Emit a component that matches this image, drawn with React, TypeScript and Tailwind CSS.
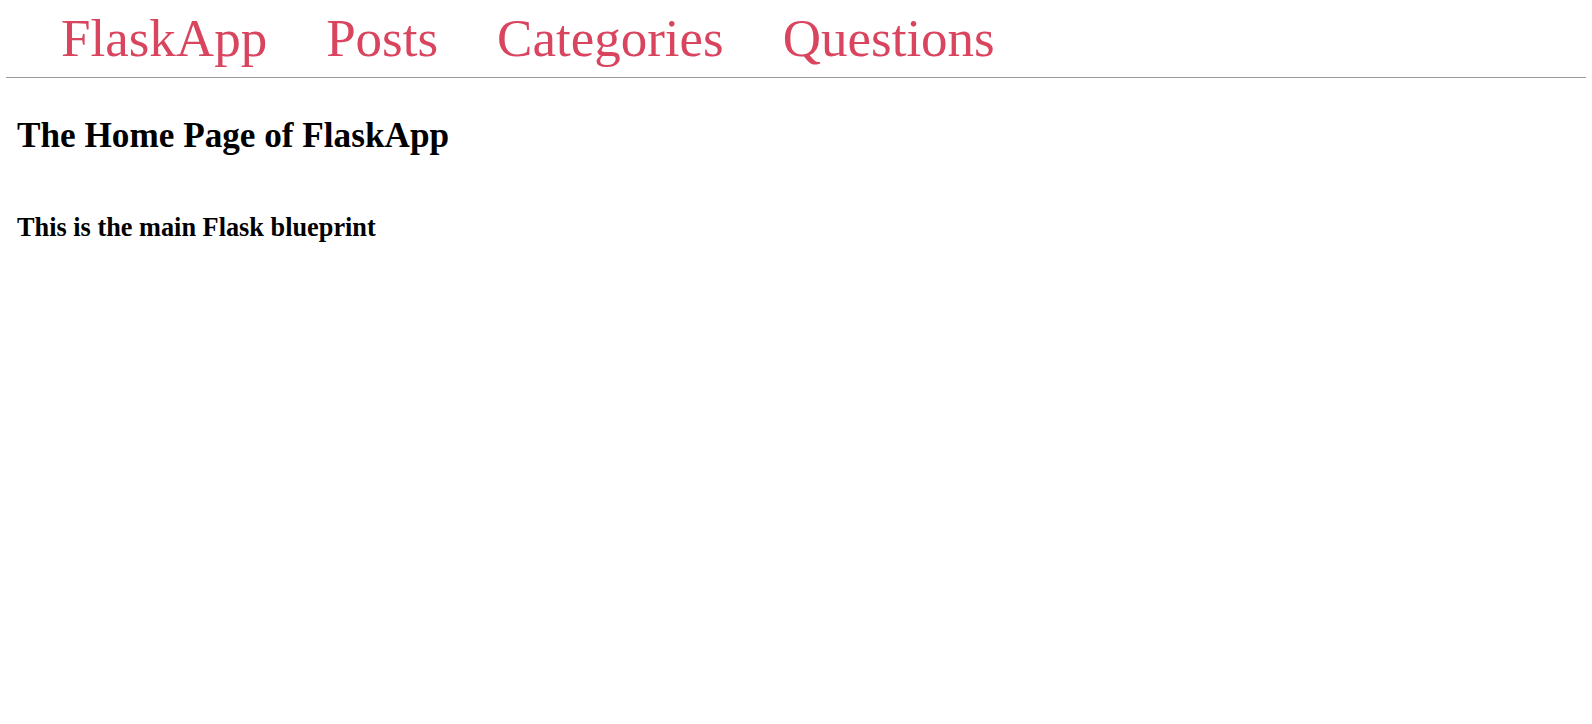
import React from 'react';

const links = ['FlaskApp', 'Posts', 'Categories', 'Questions'];

export default function App() {
  return (
    <div className="min-h-screen bg-white font-['Liberation_Serif',serif] text-black">
      {/* top navigation */}
      <nav className="mx-[6px] flex gap-[59px] border-b border-[#999] pl-[55px] pt-[12px] pb-[12px]">
        {links.map(l => (
          <a key={l} href="#" className="text-[53px] leading-[53px] text-[#d9455f]">
            {l}
          </a>
        ))}
      </nav>

      <div className="px-[17px]">
        <h1 className="mt-[40px] text-[35.2px] leading-[35px] font-bold">The Home Page of FlaskApp</h1>
        <h3 className="mt-[62px] text-[26.3px] leading-[26.3px] font-bold">This is the main Flask blueprint</h3>
      </div>
    </div>
  );
}
